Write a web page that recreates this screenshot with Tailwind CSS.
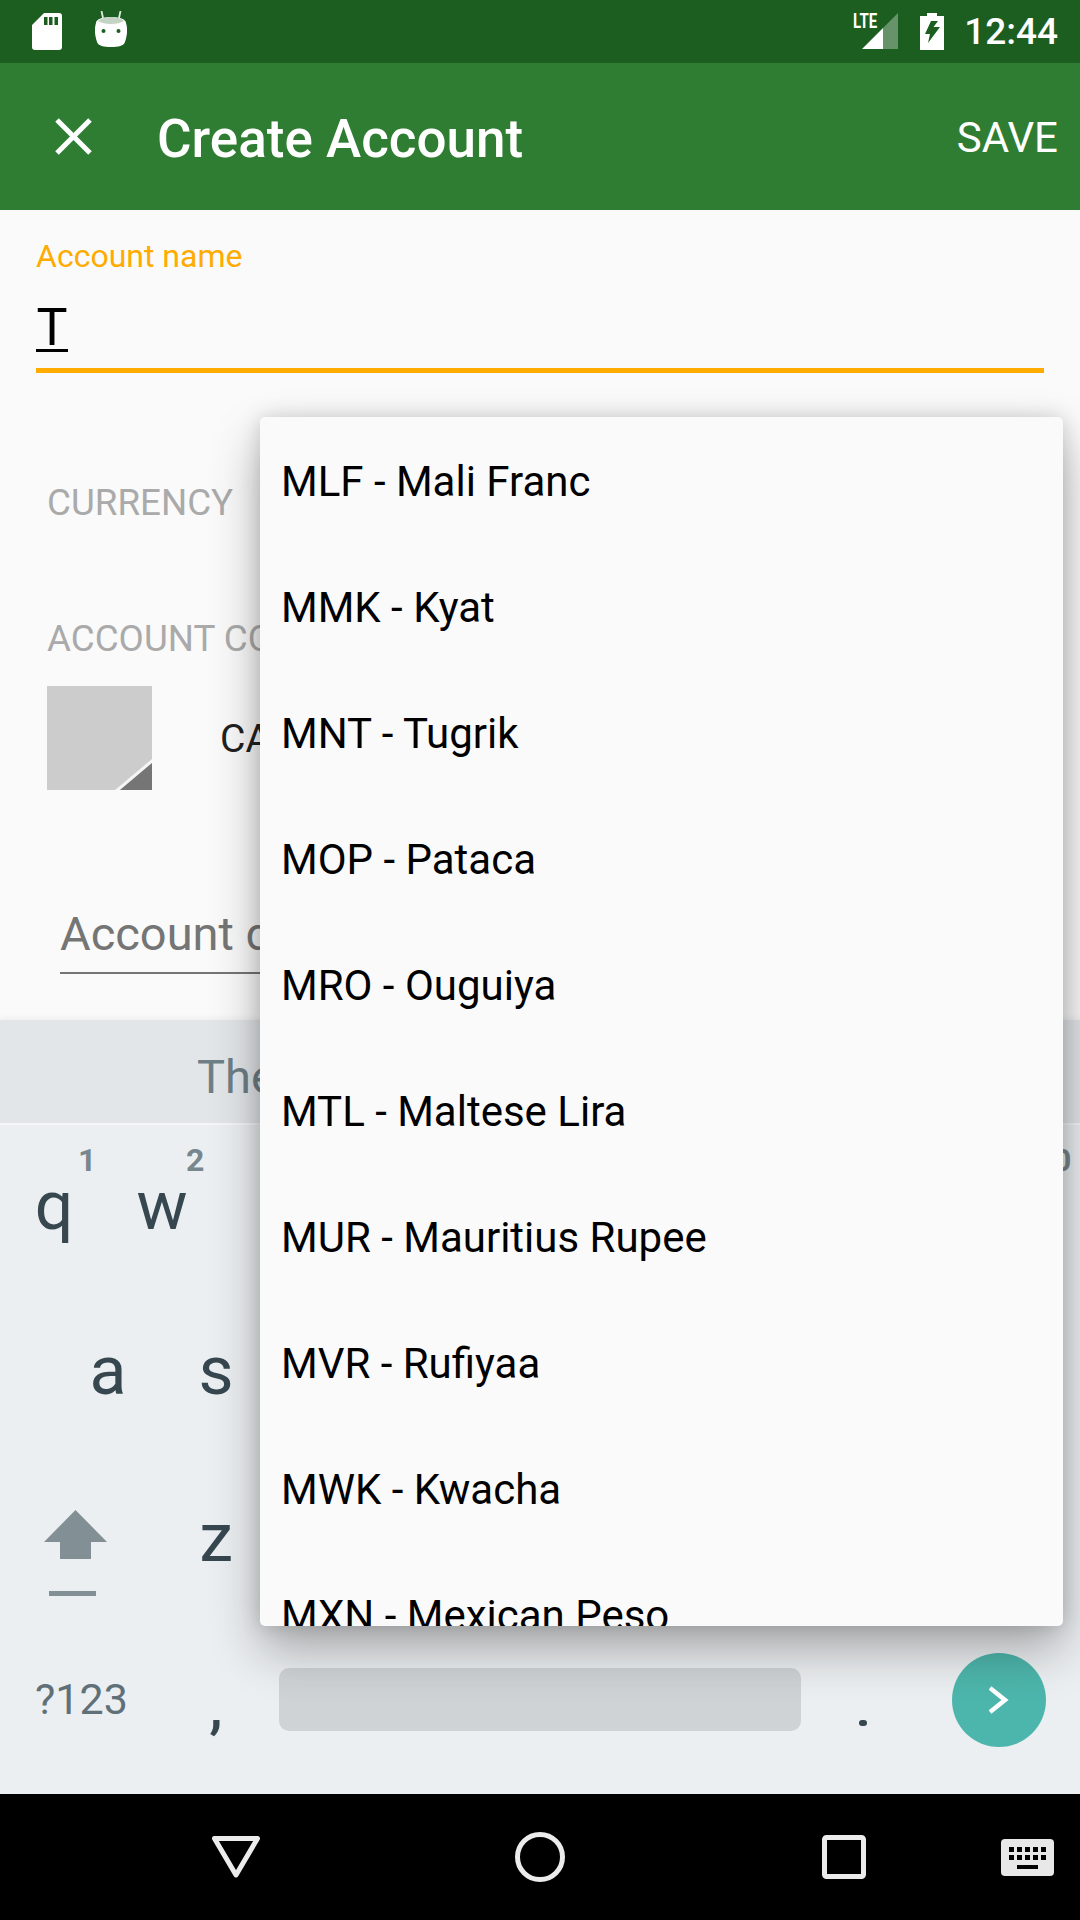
<!DOCTYPE html>
<html>
<head>
<meta charset="utf-8">
<script src="https://cdn.jsdelivr.net/npm/@tailwindcss/browser@4"></script>
</head>
<body>
<div class="relative w-[1080px] h-[1920px] overflow-hidden flex flex-col bg-[#fafafa] font-['Roboto',sans-serif]">

  <!-- status bar -->
  <div class="h-[63px] shrink-0 bg-[#1b5e20] flex items-center pl-[32px] pr-[22px] text-white">
    <svg class="w-[30px] h-[37px] mt-[-1px]" viewBox="0 0 30 37"><path fill="#fff" fill-rule="evenodd" d="M12 0H27a3 3 0 0 1 3 3V34a3 3 0 0 1-3 3H3a3 3 0 0 1-3-3V12Z M12 4V12H15.500V4Z M17 4V12H20.500V4Z M22.500 4V12H26V4Z"/></svg>
    <svg class="w-[32px] h-[37px] ml-[33px] mt-[-5px]" viewBox="0 0 32 37"><path d="M8 7 6.500 0M24 7 25.500 0" stroke="#dfe9df" stroke-width="1.800"/><path fill="#fff" d="M1 12C1 8 8 6 16 6s15 2 15 6c2 6 1 13-1 19-1 4-7 5-14 5S3 35 2 31C0 25-1 18 1 12Z"/><path fill="#c4d3c4" d="M3 10C5 8 10 6 16 6s11 2 13 4c-3 2-8 3-13 3S6 12 3 10Z"/><circle cx="8.500" cy="20" r="2" fill="#1b5e20"/><circle cx="23.500" cy="20" r="2" fill="#1b5e20"/></svg>
    <div class="ml-auto relative w-[45px] h-[37px] mt-[-1px]">
      <span class="absolute left-0 top-[-2px] text-[20px] leading-[20px] font-bold scale-x-[0.75] origin-left">LTE</span>
      <svg class="absolute left-[9px] top-0 w-[36px] h-[36px]" viewBox="0 0 36 36"><path fill="#fff" fill-opacity=".33" d="M36 0V36H21V15Z"/><path fill="#fff" d="M0 36 21 15V36Z"/></svg>
    </div>
    <svg class="w-[24px] h-[37px] ml-[22px] mt-[-1px]" viewBox="0 0 24 37"><path fill="#fff" fill-rule="evenodd" d="M7 0H17V3H24V37H0V3H7Z M11 8 5 21H10L8 30 20 14H13.500L18 8Z"/></svg>
    <span class="ml-[20px] text-[37px] leading-none font-medium">12:44</span>
  </div>

  <!-- toolbar -->
  <div class="h-[147px] shrink-0 bg-[#2e7d32] flex items-center text-white">
    <svg class="w-[37px] h-[37px] ml-[55px]" viewBox="0 0 37 37"><path d="M2 2 35 35M35 2 2 35" stroke="#fff" stroke-width="5"/></svg>
    <span class="ml-[65px] mt-[5px] text-[53px] leading-none font-medium">Create Account</span>
    <span class="ml-auto mr-[22px] mt-[2px] text-[42px] leading-none">SAVE</span>
  </div>

  <!-- form -->
  <div class="flex-1 pt-[29px] relative">
    <div class="pl-[36px] pr-[36px]">
      <div class="text-[32px] leading-[34px] text-[#ffab00]">Account name</div>
      <div class="mt-[33px] h-[46px] flex items-end"><span class="text-[52px] leading-[52px] text-black border-b-[3px] border-black h-[50px] w-[32px] text-center">T</span></div>
      <div class="mt-[16px] h-[5px] bg-[#ffab00]"></div>
    </div>
    <div class="pl-[47px] mt-[110px] text-[36.750px] leading-[40px] text-[#aaaaaa]">CURRENCY</div>
    <div class="pl-[47px] mt-[96px] text-[36.750px] leading-[40px] text-[#aaaaaa]">ACCOUNT COLOR</div>
    <div class="pl-[47px] mt-[27px] flex items-center">
      <svg class="w-[105px] h-[104px]" viewBox="0 0 105 104"><rect width="105" height="104" fill="#cccccc"/><path d="M68 104 105 73V77L73 104Z" fill="#f5f5f5"/><path d="M73 104 105 77V104Z" fill="#757575"/></svg>
      <span class="ml-[68px] text-[39px] leading-none text-[#212121] mt-[3px]">CA</span>
    </div>
    <div class="ml-[60px] mt-[120px] w-[300px] h-[48px] overflow-hidden text-[47px] leading-[48px] text-[#757575] whitespace-nowrap">Account description</div>
    <div class="ml-[60px] mt-[14px] w-[300px] h-[2px] bg-[#757575]"></div>
  </div>

  <!-- keyboard -->
  <div class="h-[774px] shrink-0 bg-[#eceff1] flex flex-col text-[#37474f]">
    <div class="h-[105px] bg-[#e3e6e9] border-b-[2px] border-[#f4f6f7] shadow-[0_-3px_5px_rgba(0,0,0,0.04)] flex items-center pl-[197px] pt-[11px] text-[47px] text-[#6f7f87]">The</div>
    <div class="h-[166px] grid grid-cols-10 items-center justify-items-center text-[68px] leading-none">
      <div class="relative w-full h-[68px] text-center mt-[-4px]">q<span class="absolute left-[78px] top-[-28px] text-[32px] font-bold text-[#78868e]">1</span></div>
      <div class="relative w-full h-[68px] text-center mt-[-4px]">w<span class="absolute left-[78px] top-[-28px] text-[32px] font-bold text-[#78868e]">2</span></div>
      <div></div><div></div><div></div><div></div><div></div><div></div><div></div>
      <div class="relative w-full h-[68px] text-center mt-[-4px]"><span class="absolute left-[81px] top-[-28px] text-[32px] font-bold text-[#78868e]">0</span></div>
    </div>
    <div class="h-[168px] flex items-center text-[68px] leading-none pl-[54px]">
      <div class="w-[108px] text-center mt-[-8px]">a</div>
      <div class="w-[108px] text-center mt-[-8px]">s</div>
    </div>
    <div class="h-[168px] flex items-center text-[68px] leading-none">
      <div class="w-[162px] flex justify-center mt-[20px]">
        <svg class="w-[63px] h-[86px] ml-[-12px]" viewBox="0 0 63 86"><path fill="#828f94" d="M31.500 0 63 32H47V49H16V32H0Z"/><rect x="5" y="81" width="47" height="5" fill="#828f94"/></svg>
      </div>
      <div class="w-[108px] text-center mt-[-10px]">z</div>
    </div>
    <div class="h-[167px] pb-[22px] flex items-center">
      <div class="w-[162px] pl-[35px] text-[43px] leading-none text-[#5f7079]">?123</div>
      <div class="w-[108px] text-center text-[60px] leading-none font-medium mt-[14px]">,</div>
      <div class="ml-[9px] w-[522px] h-[63px] rounded-[10px] bg-[#cfd3d6]"></div>
      <div class="w-[124px] mt-[46px] flex justify-center"><div class="w-[8px] h-[6px] rounded-full bg-[#37474f]"></div></div>
      <div class="ml-[27px] w-[94px] h-[94px] rounded-full bg-[#4db6ac] flex items-center justify-center">
        <svg class="w-[20px] h-[30px]" viewBox="0 0 20 30"><path d="M1 3 16 15 1 27" fill="none" stroke="#fff" stroke-width="4.500"/></svg>
      </div>
    </div>
  </div>

  <!-- nav bar -->
  <div class="h-[126px] shrink-0 bg-black relative">
    <svg class="absolute left-[212px] top-[42px] w-[48px] h-[42px]" viewBox="0 0 48 42"><path d="M2.500 2.500H45.500L24 39Z" fill="none" stroke="#ececec" stroke-width="5" stroke-linejoin="round"/></svg>
    <svg class="absolute left-[515px] top-[38px] w-[50px] h-[50px]" viewBox="0 0 50 50"><circle cx="25" cy="25" r="22.500" fill="none" stroke="#ececec" stroke-width="5"/></svg>
    <svg class="absolute left-[822px] top-[41px] w-[44px] h-[44px]" viewBox="0 0 44 44"><rect x="2.500" y="2.500" width="39" height="39" rx="2" fill="none" stroke="#ececec" stroke-width="5"/></svg>
    <svg class="absolute left-[1001px] top-[45px] w-[53px] h-[37px]" viewBox="0 0 53 37"><rect width="53" height="37" rx="4" fill="#e8e8e8"/><g fill="#000"><rect x="8" y="8" width="5" height="5"/><rect x="16" y="8" width="5" height="5"/><rect x="24" y="8" width="5" height="5"/><rect x="32" y="8" width="5" height="5"/><rect x="40" y="8" width="5" height="5"/><rect x="8" y="16" width="5" height="5"/><rect x="16" y="16" width="5" height="5"/><rect x="24" y="16" width="5" height="5"/><rect x="32" y="16" width="5" height="5"/><rect x="40" y="16" width="5" height="5"/><rect x="16" y="26" width="21" height="4"/></g></svg>
  </div>

  <!-- currency dropdown -->
  <div class="absolute left-[260px] top-[417px] w-[803px] h-[1209px] overflow-hidden rounded-[5px] bg-[#fafafa] shadow-[0_24px_50px_rgba(0,0,0,0.3),0_0_20px_rgba(0,0,0,0.15)] text-[42px] text-black">
    <div class="h-[126px] mt-[1px] flex items-center pl-[21px]">MLF - Mali Franc</div>
    <div class="h-[126px] flex items-center pl-[21px]">MMK - Kyat</div>
    <div class="h-[126px] flex items-center pl-[21px]">MNT - Tugrik</div>
    <div class="h-[126px] flex items-center pl-[21px]">MOP - Pataca</div>
    <div class="h-[126px] flex items-center pl-[21px]">MRO - Ouguiya</div>
    <div class="h-[126px] flex items-center pl-[21px]">MTL - Maltese Lira</div>
    <div class="h-[126px] flex items-center pl-[21px]">MUR - Mauritius Rupee</div>
    <div class="h-[126px] flex items-center pl-[21px]">MVR - Rufiyaa</div>
    <div class="h-[126px] flex items-center pl-[21px]">MWK - Kwacha</div>
    <div class="h-[126px] flex items-center pl-[21px]">MXN - Mexican Peso</div>
  </div>
</div>
</body>
</html>
